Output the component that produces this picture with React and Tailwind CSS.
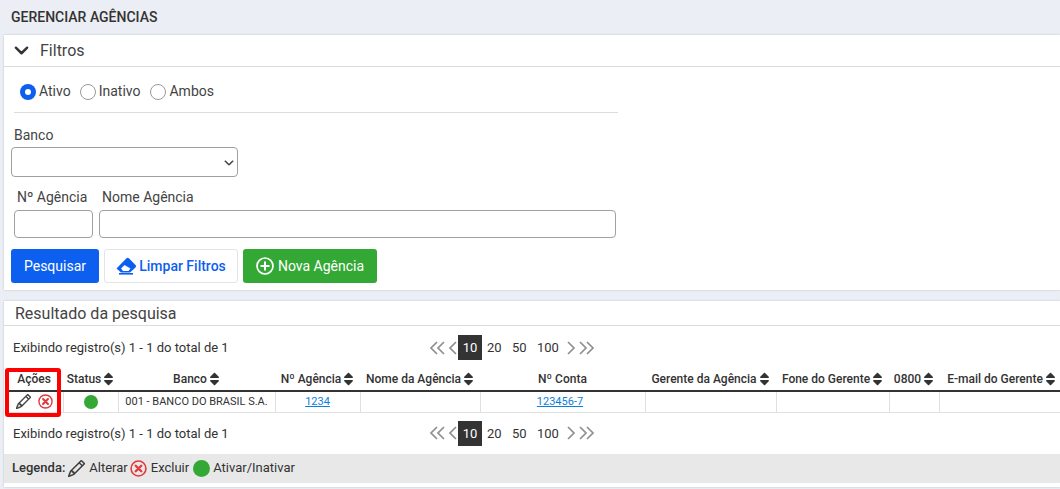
import { BsChevronDown, BsPencil } from "react-icons/bs";
import { FaSort } from "react-icons/fa";

const columns = [
  { label: "Ações", width: "w-[58px]" },
  { label: "Status", width: "w-[55px]", sort: true },
  { label: "Banco", width: "w-[157px]", sort: true },
  { label: "Nº Agência", width: "w-[85px]", sort: true },
  { label: "Nome da Agência", width: "w-[120px]", sort: true },
  { label: "Nº Conta", width: "w-[165px]" },
  { label: "Gerente da Agência", width: "w-[131px]", sort: true },
  { label: "Fone do Gerente", width: "w-[113px]", sort: true },
  { label: "0800", width: "w-[50px]", sort: true },
  { label: "E-mail do Gerente", width: "w-[125px]", sort: true },
];

const XCircle = ({ className }) => (
  <svg viewBox="0 0 16 16" className={className} fill="none" stroke="currentColor">
    <circle cx="8" cy="8" r="7" strokeWidth="1.5" />
    <path d="M5.4 5.4l5.2 5.2M10.6 5.4l-5.2 5.2" strokeWidth="2.2" strokeLinecap="round" />
  </svg>
);

const Eraser = () => (
  <svg viewBox="0 0 20 18" className="h-[18px] w-5" fill="currentColor">
    <path fillRule="evenodd" d="M0.5 11.5L10.5 1.2q1.2-1 2.4 0L19.5 8q1 1.2 0 2.4L14 15.5H5zM5 11.5L8.5 8l6 3.5L12.5 14H7z" />
    <rect x="3" y="16" width="14" height="1.6" />
  </svg>
);

const Chevrons = ({ dir, double }) => (
  <svg viewBox={double ? "0 0 16 14" : "0 0 9 14"} className={double ? "h-[14px] w-4" : "h-[14px] w-[9px]"} fill="none" stroke="#8f8f8f" strokeWidth="1.7">
    <g transform={dir === "right" ? (double ? "matrix(-1 0 0 1 16 0)" : "matrix(-1 0 0 1 9 0)") : undefined}>
      <path d="M8 1L2 7l6 6" />
      {double && <path d="M15 1L9 7l6 6" />}
    </g>
  </svg>
);

const Radio = ({ label, checked, className }) => (
  <label className={`flex items-center gap-[3px] ${className ?? ""}`}>
    {checked ? (
      <span className="flex h-4 w-4 items-center justify-center rounded-full bg-[#0d5ff0]">
        <span className="h-[6px] w-[6px] rounded-full bg-white" />
      </span>
    ) : (
      <span className="h-4 w-4 rounded-full border border-[#9a9a9a] bg-white" />
    )}
    <span>{label}</span>
  </label>
);

const Pager = () => (
  <div className="absolute left-[425px] top-0 flex h-[25px] items-center text-[13px] text-[#333]">
    <Chevrons dir="left" double />
    <span className="ml-[3px] mr-px"><Chevrons dir="left" /></span>
    <span className="flex h-[25px] w-6 items-center justify-center bg-[#333] text-white">10</span>
    <span className="ml-[5px] w-[14px] text-center">20</span>
    <span className="ml-[11px] w-[14px] text-center">50</span>
    <span className="ml-[11px] w-[21px] text-center">100</span>
    <span className="ml-[9px]"><Chevrons dir="right" /></span>
    <span className="ml-[3px]"><Chevrons dir="right" double /></span>
  </div>
);

const ResultInfo = () => (
  <div className="relative h-[25px] pl-[9px] text-[13px] leading-[25px] text-[#333]">
    Exibindo registro(s) 1 - 1 do total de 1
    <Pager />
  </div>
);

export default function App() {
  return (
    <div className="h-[489px] w-[1060px] overflow-hidden bg-[#ebeef4] font-['Roboto',sans-serif] text-[#333]">
      <h1 className="h-[35px] pl-[11px] text-[14px] font-medium leading-[34px]">GERENCIAR AGÊNCIAS</h1>

      {/* Filtros */}
      <section className="ml-1 h-[255px] bg-white shadow-[0_0_2px_rgba(0,0,0,0.2)]">
        <div className="flex h-[32px] items-center border-b border-[#dcdcdc] pl-[10px] text-[16px] text-[#444]">
          <BsChevronDown className="h-[15px] w-[15px] stroke-[1.6] text-[#333]" />
          <span className="ml-[11px]">Filtros</span>
        </div>
        <div className="ml-[10px] mt-[14px] flex w-[604px] gap-[9px] border-b border-[#dcdcdc] pb-[10px] pl-[6px] text-[14px] leading-[21px] text-[#444]">
          <Radio label="Ativo" checked />
          <Radio label="Inativo" />
          <Radio label="Ambos" className="ml-px" />
        </div>
        <div className="ml-[10px] mt-[14px] text-[14px] leading-[17px] text-[#444]">Banco</div>
        <div className="relative ml-[7px] mt-[3px] h-[30px] w-[227px] rounded-[4px] border border-[#a0a0a0] bg-white">
          <BsChevronDown className="absolute right-[3px] top-[10px] h-[10px] w-[10px] stroke-[1.6] text-[#333]" />
        </div>
        <div className="ml-[10px] mt-[12px] flex text-[14px] text-[#444]">
          <div className="w-[85px] pl-[3px]">
            <div className="leading-[17px]">Nº Agência</div>
            <div className="-ml-[3px] mt-[4px] h-[28px] w-[79px] rounded-[4px] border border-[#a0a0a0]" />
          </div>
          <div>
            <div className="pl-[3px] leading-[17px]">Nome Agência</div>
            <div className="mt-[4px] h-[28px] w-[517px] rounded-[4px] border border-[#a0a0a0]" />
          </div>
        </div>
        <div className="ml-[7px] mt-[11px] flex gap-[5px] text-[14px]">
          <button className="h-[34px] w-[88px] rounded-[3px] bg-[#0d5ff0] text-white">Pesquisar</button>
          <button className="flex h-[34px] w-[134px] items-center justify-center gap-[3px] rounded-[3px] border border-[#e4e4e4] bg-white font-medium text-[#0d5ff0]">
            <Eraser />
            Limpar Filtros
          </button>
          <button className="flex h-[34px] w-[134px] items-center justify-center gap-[4px] rounded-[3px] bg-[#34a835] text-white">
            <svg viewBox="0 0 18 18" className="h-[18px] w-[18px]" fill="none" stroke="currentColor" strokeWidth="1.7">
              <circle cx="9" cy="9" r="8" />
              <path d="M9 4.5v9M4.5 9h9" strokeWidth="2" />
            </svg>
            Nova Agência
          </button>
        </div>
      </section>

      {/* Resultado */}
      <section className="relative ml-1 mt-[11px] h-[186px] bg-white shadow-[0_0_2px_rgba(0,0,0,0.2)]">
        <div className="h-[25px] border-b border-[#dcdcdc] pl-[11px] text-[16px] leading-[25px] text-[#444]">Resultado da pesquisa</div>
        <div className="pt-[9px]"><ResultInfo /></div>

        <table className="ml-px mt-[8px] w-[1059px] table-fixed border-collapse text-[12px]">
          <thead>
            <tr className="h-[23px] border-b-2 border-[#333]">
              {columns.map((col) => (
                <th key={col.label} className={`${col.width} whitespace-nowrap p-0 text-center font-medium`}>
                  <span className="inline-flex items-center gap-[2px]">
                    {col.label}
                    {col.sort && <FaSort className="h-4 w-[11px] text-[#333]" />}
                  </span>
                </th>
              ))}
            </tr>
          </thead>
          <tbody>
            <tr className="h-[21px] border-b border-[#e0e0e0] text-[11px]">
              <td className="border-r border-[#e0e0e0] p-0">
                <div className="flex items-center justify-center gap-[7px] pl-[2px]">
                  <BsPencil className="h-[15px] w-[15px] stroke-[0.5] text-[#333]" />
                  <XCircle className="h-[15px] w-[15px] text-[#e0393e]" />
                </div>
              </td>
              <td className="border-r border-[#e0e0e0] p-0">
                <div className="mx-auto h-[14px] w-[14px] rounded-full bg-[#34a835]" />
              </td>
              <td className="border-r border-[#e0e0e0] p-0 text-center">001 - BANCO DO BRASIL S.A.</td>
              <td className="border-r border-[#e0e0e0] p-0 text-center text-[#0b7fdc] underline">1234</td>
              <td className="border-r border-[#e0e0e0] p-0" />
              <td className="border-r border-[#e0e0e0] p-0 pr-[5px] text-center text-[#0b7fdc] underline">123456-7</td>
              <td className="border-r border-[#e0e0e0] p-0" />
              <td className="border-r border-[#e0e0e0] p-0" />
              <td className="border-r border-[#e0e0e0] p-0" />
              <td className="p-0" />
            </tr>
          </tbody>
        </table>

        <div className="pt-[8px]"><ResultInfo /></div>

        <div className="mt-[8px] flex h-[29px] items-center bg-[#e8e8e8] pl-2 text-[13px] text-[#333]">
          <span className="font-medium">Legenda:</span>
          <BsPencil className="ml-[3px] h-[17px] w-[17px] stroke-[0.4]" />
          <span className="ml-1">Alterar</span>
          <XCircle className="ml-[2px] h-[17px] w-[17px] text-[#e0393e]" />
          <span className="ml-1">Excluir</span>
          <span className="ml-1 h-[17px] w-[17px] rounded-full bg-[#34a835]" />
          <span className="ml-[3px]">Ativar/Inativar</span>
        </div>

        {/* destaque da coluna de ações */}
        <div className="absolute left-[1px] top-[67px] h-[49px] w-[56px] rounded-[3px] border-4 border-[#fe0000]" />
      </section>
    </div>
  );
}
